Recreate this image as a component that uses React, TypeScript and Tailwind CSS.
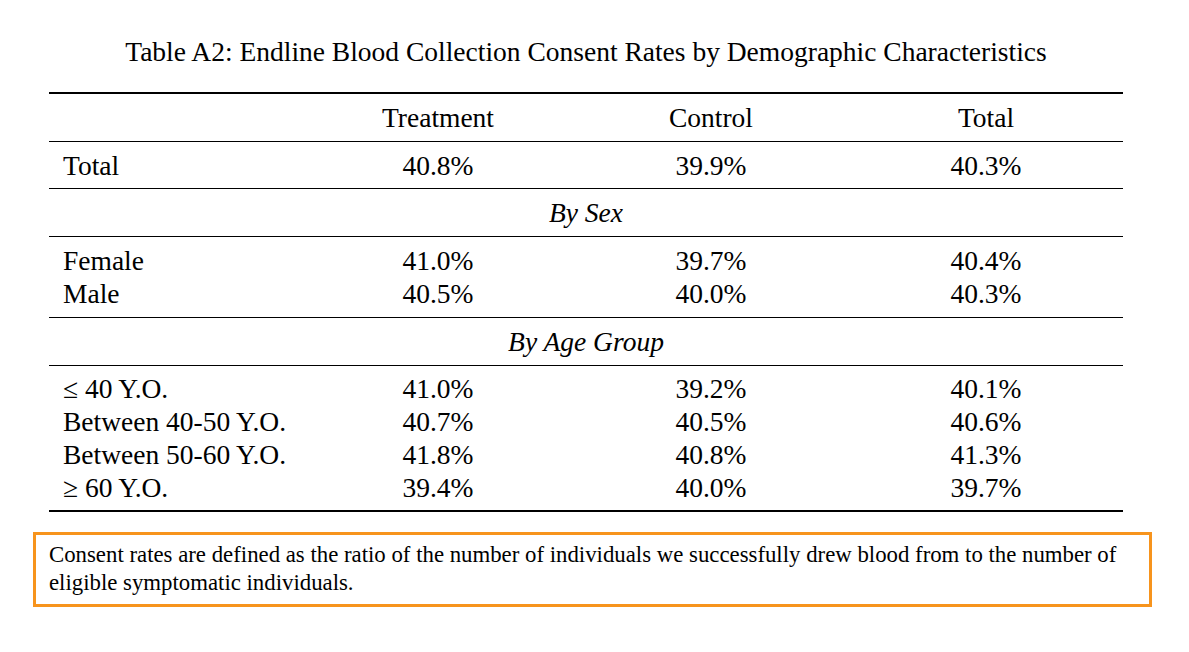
import React from "react";

const serif = { fontFamily: '"Liberation Serif", "Times New Roman", serif' };

type Row = [string, string, string, string];

const sexRows: Row[] = [
  ["Female", "41.0%", "39.7%", "40.4%"],
  ["Male", "40.5%", "40.0%", "40.3%"],
];

const ageRows: Row[] = [
  ["≤ 40 Y.O.", "41.0%", "39.2%", "40.1%"],
  ["Between 40-50 Y.O.", "40.7%", "40.5%", "40.6%"],
  ["Between 50-60 Y.O.", "41.8%", "40.8%", "41.3%"],
  ["≥ 60 Y.O.", "39.4%", "40.0%", "39.7%"],
];

const grid = "grid grid-cols-[254px_270px_276px_274px] items-center";

function DataRow({ r, h }: { r: Row; h: string }) {
  return (
    <div className={`${grid} ${h}`}>
      <div className="pl-[14px]">{r[0]}</div>
      <div className="text-center">{r[1]}</div>
      <div className="text-center">{r[2]}</div>
      <div className="text-center">{r[3]}</div>
    </div>
  );
}

export default function App() {
  return (
    <div className="w-[1189px] h-[652px] bg-white text-black overflow-hidden" style={serif}>
      <div className="pt-[36px] w-[1074px] ml-[49px]">
        <div className="text-center text-[27.5px] leading-[32px] mb-[24px] whitespace-nowrap">
          Table A2: Endline Blood Collection Consent Rates by Demographic Characteristics
        </div>
        <div className="text-[27.5px] leading-[33px]">
          <div className="border-t-2 border-black" />
          <div className={`${grid} h-[47px]`}>
            <div />
            <div className="text-center">Treatment</div>
            <div className="text-center">Control</div>
            <div className="text-center">Total</div>
          </div>
          <div className="border-t border-black" />
          <DataRow r={["Total", "40.8%", "39.9%", "40.3%"]} h="h-[46px]" />
          <div className="border-t border-black" />
          <div className="h-[47px] flex items-center justify-center italic">By Sex</div>
          <div className="border-t border-black" />
          <div className="py-[7px]">
            {sexRows.map((r) => (
              <DataRow key={r[0]} r={r} h="h-[33px]" />
            ))}
          </div>
          <div className="border-t border-black" />
          <div className="h-[47px] flex items-center justify-center italic">By Age Group</div>
          <div className="border-t border-black" />
          <div className="py-[6px]">
            {ageRows.map((r) => (
              <DataRow key={r[0]} r={r} h="h-[33px]" />
            ))}
          </div>
          <div className="border-t-2 border-black" />
        </div>
      </div>
      <div className="mt-[20px] ml-[33px] w-[1119px] h-[75px] border-[3px] border-[#f7941d] pl-[13px] pt-[6px] text-[22.8px] leading-[28px]">
        Consent rates are defined as the ratio of the number of individuals we successfully drew blood from to the number of
        eligible symptomatic individuals.
      </div>
    </div>
  );
}
